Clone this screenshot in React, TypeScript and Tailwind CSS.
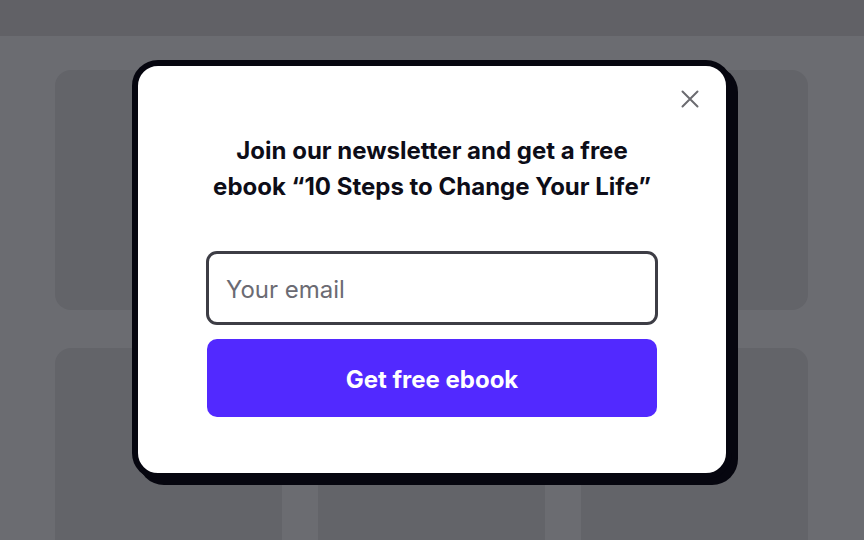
import React from "react";

export default function App() {
  return (
    <div
      className="relative w-full h-[540px] overflow-hidden bg-[#6b6c71]"
      style={{ fontFamily: "Inter, 'Noto Sans', sans-serif" }}
    >
      <div className="h-[36px] bg-[#616166]" />
      <div className="grid grid-cols-3 gap-x-[36px] gap-y-[38px] pl-[55px] pr-[56px] pt-[34px]">
        {[0, 1, 2, 3, 4, 5].map((i) => (
          <div key={i} className="h-[240px] rounded-[16px] bg-[#636469]" />
        ))}
      </div>

      <div className="absolute left-[132px] top-[60px] w-[600px] h-[419px] rounded-[26px] border-[6px] border-[#06060f] bg-white shadow-[6px_6px_0_0_#06060f]">
        <button className="absolute right-[26px] top-[23px] w-[20px] h-[20px] flex items-center justify-center text-[#6b6b70]">
          <svg width="20" height="20" viewBox="0 0 20 20" fill="none" stroke="currentColor" strokeWidth="2" strokeLinecap="round">
            <path d="M2.5 2.5 L17.5 17.5 M17.5 2.5 L2.5 17.5" />
          </svg>
        </button>
        <div className="flex flex-col items-center pt-[67px]">
          <h2 className="text-[24px] leading-[36px] font-bold text-[#0d0d18] text-center">
            Join our newsletter and get a free
            <br />
            ebook “10 Steps to Change Your Life”
          </h2>
          <div className="mt-[46px] w-[452px] h-[74px] rounded-[11px] border-[3px] border-[#3d3d45] flex items-center px-[17px] pt-[3px]">
            <span className="text-[24px] text-[#6b6b73]">Your email</span>
          </div>
          <button className="mt-[14px] w-[450px] h-[78px] rounded-[10px] bg-[#5229ff] text-white text-[24px] font-bold pt-[3px]">
            Get free ebook
          </button>
        </div>
      </div>
    </div>
  );
}
